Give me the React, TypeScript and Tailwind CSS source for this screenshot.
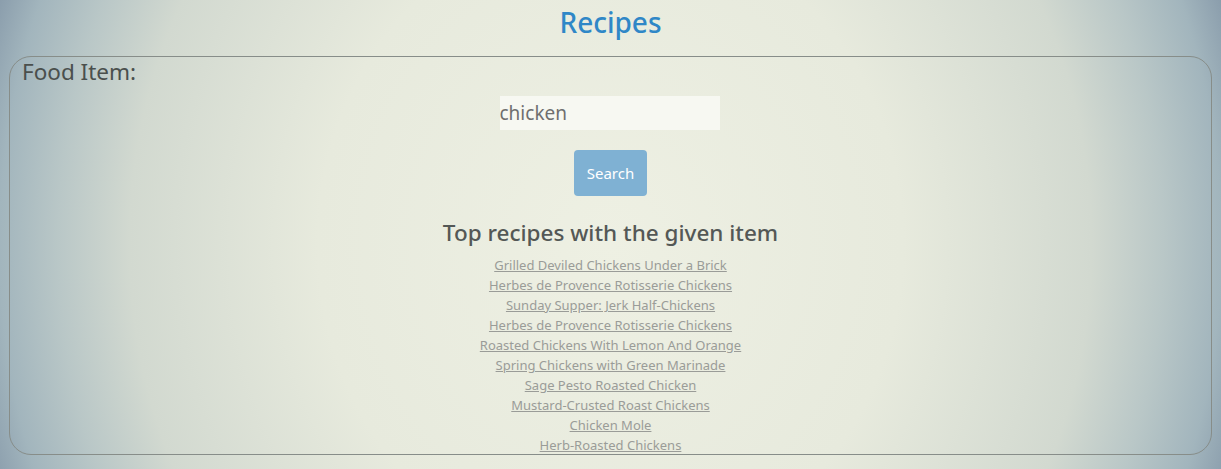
const recipes = [
  "Grilled Deviled Chickens Under a Brick",
  "Herbes de Provence Rotisserie Chickens",
  "Sunday Supper: Jerk Half-Chickens",
  "Herbes de Provence Rotisserie Chickens",
  "Roasted Chickens With Lemon And Orange",
  "Spring Chickens with Green Marinade",
  "Sage Pesto Roasted Chicken",
  "Mustard-Crusted Roast Chickens",
  "Chicken Mole",
  "Herb-Roasted Chickens",
];

const App = () => {
  return (
    <div className="w-[1221px] h-[469px] overflow-hidden bg-[radial-gradient(ellipse_650px_720px_at_50%_52%,#eef0e3_0%,#e7eadd_45%,#d2d9d0_74%,#b9c7c7_85%,#a2b5bd_94%,#8a9dac_100%)] font-['Noto_Sans',sans-serif]">
      <div className="h-[56px] flex justify-center">
        <h1 className="text-[28px] leading-[44px] font-medium text-[#2f87c7]">Recipes</h1>
      </div>
      <div className="mx-[9px] h-[399px] border border-[#878d89] rounded-[22px] overflow-hidden">
        <div className="pl-[12px] pt-[1px] text-[22.5px] leading-[28px] text-[#4a4f4d]">Food Item:</div>
        <div className="flex flex-col items-center">
          <input
            defaultValue="chicken"
            className="mt-[10px] ml-[-2px] w-[220px] h-[34px] bg-[#f7f8f2] text-[19px] text-[#6f6f6f] outline-none px-0"
          />
          <button className="mt-[20px] w-[73px] h-[46px] rounded-[4px] bg-[#7fb1d3] text-white text-[15px]">
            Search
          </button>
          <h2 className="mt-[23px] text-[22.5px] leading-[28px] font-medium text-[#545856]">
            Top recipes with the given item
          </h2>
          <ul className="mt-[8px] flex flex-col items-center">
            {recipes.map((r, i) => (
              <li key={i} className="text-[13px] leading-[20px]">
                <a href="#" className="text-[#9a9c98] underline">{r}</a>
              </li>
            ))}
          </ul>
        </div>
      </div>
    </div>
  );
};

export default App;
